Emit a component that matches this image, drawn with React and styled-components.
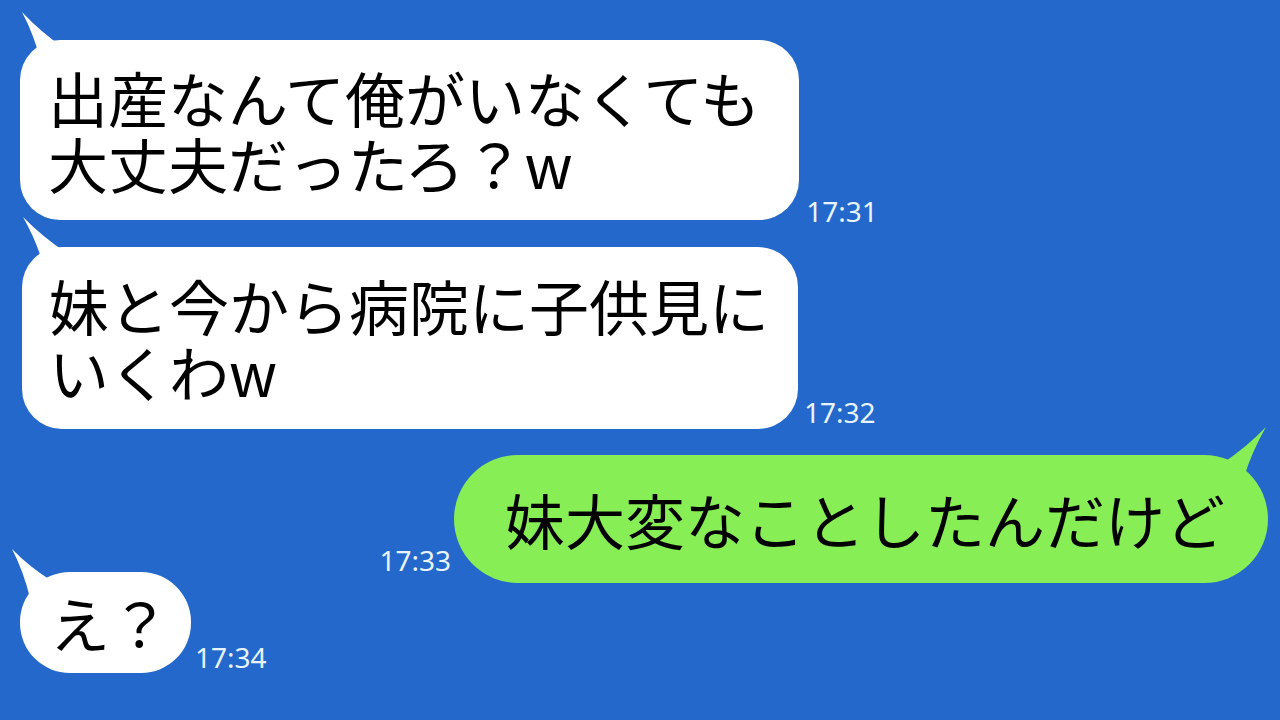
import React from "react";
import styled, { createGlobalStyle } from "styled-components";

const GlobalStyle = createGlobalStyle`
  html, body { margin: 0; padding: 0; background: #2568cb; }
  body { font-family: "Noto Sans CJK JP", "Noto Sans", sans-serif; }
`;

const Screen = styled.div`
  width: 1280px;
  height: 720px;
  overflow: hidden;
  box-sizing: border-box;
  background: #2568cb;
  display: flex;
  flex-direction: column;
  padding: 40px 12px 0 20px;
`;

const Row = styled.div`
  display: flex;
  align-items: flex-end;
  justify-content: ${(p) => (p.$mine ? "flex-end" : "flex-start")};
  gap: ${(p) => p.$gap}px;
  margin-top: ${(p) => p.$top}px;
  margin-left: ${(p) => p.$indent}px;
`;

const Bubble = styled.div`
  position: relative;
  flex: none;
  background: ${(p) => (p.$mine ? "#88ee55" : "#ffffff")};
  border-radius: ${(p) => p.$radius}px;
  padding: ${(p) => p.$pad};
  font-family: "Noto Sans CJK JP", "Noto Sans", sans-serif;
  font-size: 60px;
  line-height: 66px;
  color: #000;
  white-space: nowrap;
`;

const Line = styled.div`
  height: 66px;
`;

const Tail = styled.svg`
  position: absolute;
  top: 0;
  ${(p) => (p.$mine ? "right: 0;" : "left: 0;")}
  width: 1px;
  height: 1px;
  overflow: visible;
`;

const Time = styled.span`
  flex: none;
  font-family: "Noto Sans", "DejaVu Sans", sans-serif;
  font-size: 28px;
  line-height: 28px;
  color: #e8f4ff;
  margin-bottom: ${(p) => p.$drop}px;
`;

const messages = [
  {
    lines: ["出産なんて俺がいなくても", "大丈夫だったろ？w"],
    time: "17:31",
    top: 0,
    indent: 0,
    gap: 7,
    drop: -5,
    radius: 40,
    pad: "24px 39px 24px 28px",
    tail: [[2, -28], [21, 22], [44, 8]],
  },
  {
    lines: ["妹と今から病院に子供見に", "いくわw"],
    time: "17:32",
    top: 27,
    indent: 2,
    gap: 6,
    drop: 3,
    radius: 40,
    pad: "25px 29px 25px 27px",
    tail: [[1, -30], [22, 20], [46, 7]],
  },
  {
    lines: ["妹大変なことしたんだけど"],
    time: "17:33",
    mine: true,
    top: 26,
    indent: 0,
    gap: 3,
    drop: 9,
    radius: 64,
    pad: "31px 43px 31px 51px",
    tail: [[-1, -28], [-44, 8], [-23, 22]],
  },
  {
    lines: ["え？"],
    time: "17:34",
    top: -11,
    indent: 0,
    gap: 4,
    drop: 2,
    radius: 50,
    pad: "17px 21px 18px 30px",
    tail: [[-8, -23], [10, 26], [32, 9]],
  },
];

function tailPath([t, a, b]) {
  const c1 = [(t[0] + a[0]) / 2 + (b[0] - a[0]) * 0.12, (t[1] + a[1]) / 2 + (b[1] - a[1]) * 0.12];
  const c2 = [(t[0] + b[0]) / 2 - (b[0] - a[0]) * 0.12, (t[1] + b[1]) / 2 - (b[1] - a[1]) * 0.12];
  return `M${t[0]} ${t[1]} Q${c1[0]} ${c1[1]} ${a[0]} ${a[1]} L${b[0]} ${b[1]} Q${c2[0]} ${c2[1]} ${t[0]} ${t[1]} Z`;
}

function Message({ m }) {
  const bubble = (
    <Bubble $mine={m.mine} $radius={m.radius} $pad={m.pad}>
      <Tail $mine={m.mine} aria-hidden="true">
        <path d={tailPath(m.tail)} fill={m.mine ? "#88ee55" : "#ffffff"} />
      </Tail>
      {m.lines.map((l, i) => (
        <Line key={i}>{l}</Line>
      ))}
    </Bubble>
  );
  const time = <Time $drop={m.drop}>{m.time}</Time>;
  return (
    <Row $mine={m.mine} $gap={m.gap} $top={m.top} $indent={m.indent}>
      {m.mine ? (
        <>
          {time}
          {bubble}
        </>
      ) : (
        <>
          {bubble}
          {time}
        </>
      )}
    </Row>
  );
}

export default function App() {
  return (
    <>
      <GlobalStyle />
      <Screen>
        {messages.map((m, i) => (
          <Message key={i} m={m} />
        ))}
      </Screen>
    </>
  );
}
